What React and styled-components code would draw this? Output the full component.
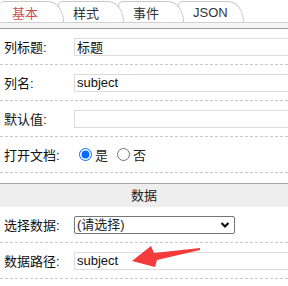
import React from "react";
import styled, { createGlobalStyle } from "styled-components";

const Global = createGlobalStyle`
  html, body {
    margin: 0;
    padding: 0;
    overflow: hidden;
    background: #fff;
  }
  body {
    font-family: "Liberation Sans", "Noto Sans CJK SC", sans-serif;
    font-size: 13px;
    color: #222;
  }
`;

const Panel = styled.div`
  position: relative;
  width: 288px;
  overflow: hidden;
`;

const TabBar = styled.div`
  display: flex;
  align-items: flex-end;
  height: 22px;
  border-bottom: 1px solid #d0d0d0;
`;

const Tab = styled.div`
  position: relative;
  z-index: ${(p) => p.$z};
  box-sizing: border-box;
  width: ${(p) => (p.$first ? "64px" : "66px")};
  height: 21px;
  margin-right: -6px;
  padding-left: ${(p) => (p.$first ? "12px" : "14px")};
  padding-top: 1px;
  display: flex;
  align-items: center;
  border: 1px solid #c8c8c8;
  border-left-width: ${(p) => (p.$first ? "0" : "1px")};
  border-bottom: none;
  border-radius: 5px 16px 0 0 / 5px 21px 0 0;
  background: #fff;
  color: ${(p) => (p.$active ? "#c8504f" : "#333")};
  font-size: 13px;
`;

const Strip = styled.div`
  height: 5px;
  background: #f5f5f5;
  border-bottom: 1px solid #9a9a9a;
`;

const Section = styled.div`
  padding-bottom: 10px;
  border-bottom: 1px solid #a8a8a8;
`;

const SectionTitle = styled.div`
  height: 23px;
  line-height: 23px;
  text-align: center;
  background: #eeeeee;
  color: #222;
`;

const Row = styled.div`
  display: flex;
  align-items: center;
  padding: 8px 0;
  border-bottom: 1px dashed #c8c8c8;
`;

const Label = styled.div`
  box-sizing: border-box;
  width: 74px;
  padding-left: 4px;
  flex: none;
  color: #111;
`;

const TextInput = styled.input`
  box-sizing: border-box;
  flex: 1;
  min-width: 0;
  height: 18px;
  padding: 0 2px;
  border: 1px solid #dcdcdc;
  border-right: none;
  outline: none;
  font: inherit;
  color: #111;
`;

const SelectWrap = styled.div`
  position: relative;
  width: 161px;
  height: 18px;
`;

const Select = styled.select`
  box-sizing: border-box;
  width: 100%;
  height: 100%;
  padding: 0 0 0 2px;
  border: 1px solid #767676;
  border-radius: 2px;
  appearance: none;
  background: #fff;
  font: inherit;
  color: #222;
  outline: none;
`;

const Chevron = styled.svg`
  position: absolute;
  right: 5px;
  top: 5px;
  pointer-events: none;
`;

const Radios = styled.div`
  display: flex;
  align-items: center;
  height: 18px;
`;

const RadioLabel = styled.label`
  display: flex;
  align-items: center;
  margin-right: 4px;

  input {
    width: 13px;
    height: 13px;
    margin: 0 3px 0 5px;
    accent-color: #0a6cff;
  }
`;

const Arrow = styled.svg`
  position: absolute;
  left: 0;
  top: 0;
  pointer-events: none;
`;

export default function App() {
  const tabs = ["基本", "样式", "事件", "JSON"];
  return (
    <Panel>
      <Global />
      <TabBar>
        {tabs.map((t, i) => (
          <Tab key={t} $active={i === 0} $first={i === 0} $z={10 - i}>
            {t}
          </Tab>
        ))}
      </TabBar>
      <Strip />
      <Section>
        <Row>
          <Label>列标题:</Label>
          <TextInput defaultValue="标题" />
        </Row>
        <Row>
          <Label>列名:</Label>
          <TextInput defaultValue="subject" />
        </Row>
        <Row>
          <Label>默认值:</Label>
          <TextInput defaultValue="" />
        </Row>
        <Row>
          <Label>打开文档:</Label>
          <Radios>
            <RadioLabel>
              <input type="radio" name="doc" defaultChecked />是
            </RadioLabel>
            <RadioLabel>
              <input type="radio" name="doc" />否
            </RadioLabel>
          </Radios>
        </Row>
      </Section>
      <SectionTitle>数据</SectionTitle>
      <Section>
        <Row>
          <Label>选择数据:</Label>
          <SelectWrap>
            <Select defaultValue="">
              <option value="">(请选择)</option>
            </Select>
            <Chevron width="10" height="8" viewBox="0 0 10 8">
              <path d="M1.5 2 L5 5.5 L8.5 2" fill="none" stroke="#111" strokeWidth="2.2" />
            </Chevron>
          </SelectWrap>
        </Row>
        <Row>
          <Label>数据路径:</Label>
          <TextInput defaultValue="subject" />
        </Row>
      </Section>
      <Arrow width="288" height="286" viewBox="0 0 288 286">
        <polygon
          points="132,261 151,246 154,253 200,248 200,250 157,260 155,267"
          fill="#f23b3b"
        />
      </Arrow>
    </Panel>
  );
}
